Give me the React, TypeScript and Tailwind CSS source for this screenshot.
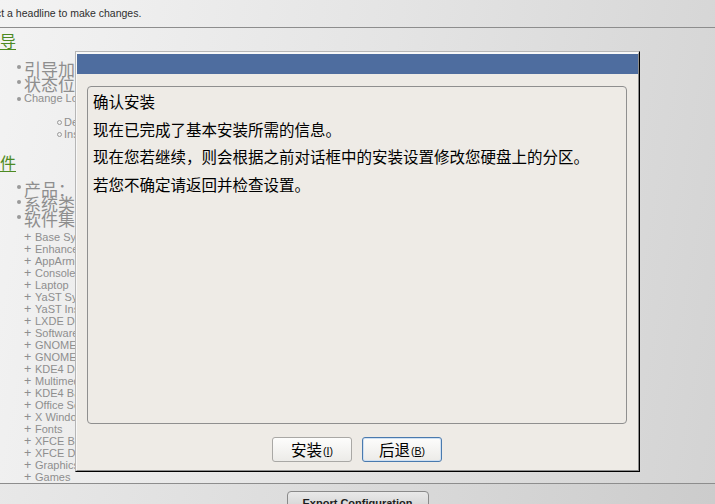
import React from 'react';

const patterns = [
  'Base System',
  'Enhanced Base System',
  'AppArmor',
  'Console Tools',
  'Laptop',
  'YaST System Administration',
  'YaST Installation Packages',
  'LXDE Desktop Environment',
  'Software Management',
  'GNOME Base System',
  'GNOME Desktop Environment',
  'KDE4 Desktop Environment',
  'Multimedia',
  'KDE4 Base System',
  'Office Software',
  'X Window System',
  'Fonts',
  'XFCE Base System',
  'XFCE Desktop Environment',
  'Graphics',
  'Games',
];

function Bullet({ children, cjk }: { children: React.ReactNode; cjk?: boolean }) {
  return (
    <li className="flex items-center h-[15px] whitespace-nowrap">
      <span className={`w-[4px] h-[4px] rounded-full bg-[#9a9a9a] mr-[3px] ${cjk ? '-mt-[4px]' : ''}`} />
      <span className={cjk ? "text-[17px] leading-[15px] font-['Noto_Sans_CJK_SC',sans-serif]" : 'text-[11px] leading-[15px]'}>{children}</span>
    </li>
  );
}

function Heading({ children }: { children: React.ReactNode }) {
  return (
    <h2 className="-ml-[16px] text-[16px] leading-[22px] h-[22px] text-[#4d8a22] underline underline-offset-[2px] font-['Noto_Sans_CJK_SC',sans-serif]">
      {children}
    </h2>
  );
}

function DialogButton({ label, mnemonic, focused }: { label: string; mnemonic: string; focused?: boolean }) {
  return (
    <button
      className={`w-[80px] h-[25px] rounded-[3px] border bg-gradient-to-b from-[#fdfdfc] to-[#ecebe8] flex items-center justify-center text-black ${
        focused ? 'border-[#4a7aae] shadow-[inset_0_0_0_1px_#cfe0f2]' : 'border-[#a9a8a5]'
      }`}
    >
      <span className="text-[15.5px] leading-none font-['Noto_Sans_CJK_SC',sans-serif]">{label}</span>
      <span className="text-[10.5px] leading-none mt-[3px] ml-[1px]">
        (<span className="underline">{mnemonic}</span>)
      </span>
    </button>
  );
}

export default function App() {
  return (
    <div className="relative w-[715px] h-[504px] overflow-hidden bg-[linear-gradient(100deg,#f3f3f3_0%,#e4e4e4_50%,#d3d3d3_100%)] font-['Liberation_Sans',sans-serif] flex flex-col">
      {/* page header */}
      <div className="h-[28px] shrink-0 border-b border-[#8d8d8d] flex items-center text-[10.5px] text-[#2e2e2e] whitespace-nowrap">
        <span className="-ml-[25px]">Select a headline to make changes.</span>
      </div>

      {/* summary content, scrolled horizontally */}
      <div className="flex-1 overflow-hidden text-[#8e8e8e]">
        <div className="mt-[1px]">
          <Heading>引导</Heading>
        </div>
        <ul className="mt-[10px] pl-[17px]">
          <Bullet cjk>引导加载程序类型</Bullet>
          <Bullet cjk>状态位置</Bullet>
          <Bullet>Change Location</Bullet>
        </ul>
        <ul className="mt-[10px] pl-[57px] text-[11px] leading-[12px]">
          {['Default Section', 'Installation'].map((t) => (
            <li key={t} className="flex items-center h-[12px] whitespace-nowrap">
              <span className="w-[5px] h-[5px] rounded-full border border-[#9a9a9a] mr-[2px]" />
              {t}
            </li>
          ))}
        </ul>
        <div className="mt-[11px]">
          <Heading>软件</Heading>
        </div>
        <ul className="mt-[8px] pl-[17px]">
          <Bullet cjk>产品：openSUSE</Bullet>
          <Bullet cjk>系统类型</Bullet>
          <Bullet cjk>软件集</Bullet>
        </ul>
        <ul className="mt-[5px] pl-[24px] text-[11px] leading-[12px]">
          {patterns.map((p) => (
            <li key={p} className="flex items-center h-[12px] whitespace-nowrap">
              <span className="w-[11px] text-[12.5px] leading-[12px]">+</span>
              {p}
            </li>
          ))}
        </ul>
      </div>

      {/* page footer */}
      <div className="h-[21px] shrink-0 border-t border-[#8d8d8d] bg-black/[0.03] flex justify-center pt-[7px]">
        <button className="w-[142px] h-[24px] rounded-[4px] border border-[#8a8a8a] bg-gradient-to-b from-[#e9e9e9] to-[#cdcdcd] text-[11px] font-bold text-[#1e1e1e] leading-[20px] self-start">
          Export Configuration
        </button>
      </div>

      {/* modal dialog */}
      <div className="absolute left-[75px] top-[51px] w-[565px] h-[421px] border border-[#b6b6b6] border-r-black border-b-black flex flex-col">
        <div className="flex-1 flex flex-col border-t-2 border-l border-r border-b border-t-[#f8f8f8] border-l-[#f8f8f8] border-r-[#8e8e8e] border-b-[#8e8e8e] bg-[#eeebe6]">
          <div className="h-[20px] shrink-0 bg-[#4e6d9f]" />
          <div className="flex-1 flex flex-col pt-[12px] pl-[10px] pr-[11px] pb-[8px]">
            <div className="flex-1 border border-[#8f8f8f] rounded-[4px] pl-[5px] pt-[1px] text-[15.5px] leading-[27.5px] text-black font-['Noto_Sans_CJK_SC',sans-serif]">
              <p>确认安装</p>
              <p>现在已完成了基本安装所需的信息。</p>
              <p>现在您若继续，则会根据之前对话框中的安装设置修改您硬盘上的分区。</p>
              <p>若您不确定请返回并检查设置。</p>
            </div>
            <div className="mt-[13px] h-[25px] flex justify-center gap-[10px]">
              <DialogButton label="安装" mnemonic="I" />
              <DialogButton label="后退" mnemonic="B" focused />
            </div>
          </div>
        </div>
      </div>
    </div>
  );
}
